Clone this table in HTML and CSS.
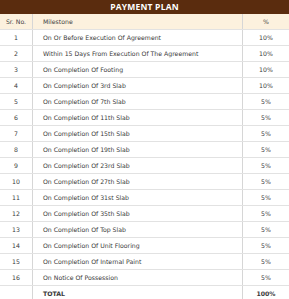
FILE: index.html
```html
<!DOCTYPE html>
<html>
<head>
<meta charset="utf-8">
<link rel="stylesheet" href="styles.css">
</head>
<body>
<div class="plan">
  <div class="title">PAYMENT PLAN</div>
  <table class="grid">
    <thead>
      <tr><th class="sr">Sr. No.</th><th class="ms">Milestone</th><th class="pc">%</th></tr>
    </thead>
    <tbody>
      <tr><td class="sr">1</td><td class="ms">On Or Before Execution Of Agreement</td><td class="pc">10%</td></tr>
      <tr><td class="sr">2</td><td class="ms">Within 15 Days From Execution Of The Agreement</td><td class="pc">10%</td></tr>
      <tr><td class="sr">3</td><td class="ms">On Completion Of Footing</td><td class="pc">10%</td></tr>
      <tr><td class="sr">4</td><td class="ms">On Completion Of 3rd Slab</td><td class="pc">10%</td></tr>
      <tr><td class="sr">5</td><td class="ms">On Completion Of 7th Slab</td><td class="pc">5%</td></tr>
      <tr><td class="sr">6</td><td class="ms">On Completion Of 11th Slab</td><td class="pc">5%</td></tr>
      <tr><td class="sr">7</td><td class="ms">On Completion Of 15th Slab</td><td class="pc">5%</td></tr>
      <tr><td class="sr">8</td><td class="ms">On Completion Of 19th Slab</td><td class="pc">5%</td></tr>
      <tr><td class="sr">9</td><td class="ms">On Completion Of 23rd Slab</td><td class="pc">5%</td></tr>
      <tr><td class="sr">10</td><td class="ms">On Completion Of 27th Slab</td><td class="pc">5%</td></tr>
      <tr><td class="sr">11</td><td class="ms">On Completion Of 31st Slab</td><td class="pc">5%</td></tr>
      <tr><td class="sr">12</td><td class="ms">On Completion Of 35th Slab</td><td class="pc">5%</td></tr>
      <tr><td class="sr">13</td><td class="ms">On Completion Of Top Slab</td><td class="pc">5%</td></tr>
      <tr><td class="sr">14</td><td class="ms">On Completion Of Unit Flooring</td><td class="pc">5%</td></tr>
      <tr><td class="sr">15</td><td class="ms">On Completion Of Internal Paint</td><td class="pc">5%</td></tr>
      <tr><td class="sr">16</td><td class="ms">On Notice Of Possession</td><td class="pc">5%</td></tr>
      <tr class="total"><td class="sr"></td><td class="ms">TOTAL</td><td class="pc">100%</td></tr>
    </tbody>
  </table>
</div>
</body>
</html>
```
FILE: styles.css
```css
html, body {
  margin: 0;
  padding: 0;
  background: #ffffff;
}
.plan {
  width: 289px;
  font-family: "DejaVu Sans", "Open Sans", sans-serif;
  color: #3a3a3a;
}
.title {
  height: 14px;
  background: #5a2c0e;
  color: #ffffff;
  font-family: "Open Sans", sans-serif;
  font-weight: 700;
  font-size: 8.5px;
  line-height: 14px;
  text-align: center;
  letter-spacing: 0.2px;
}
.grid {
  width: 289px;
  border-collapse: collapse;
  table-layout: fixed;
  font-size: 6.2px;
}
.grid th, .grid td {
  height: 15px;
  padding: 0;
  border-bottom: 1px solid #e2e2e2;
  vertical-align: middle;
  white-space: nowrap;
}
.grid thead th {
  background: #fcf1de;
  font-weight: 400;
  color: #444444;
  height: 15px;
}
.sr {
  width: 32px;
  text-align: center;
  border-right: 1px solid #d6d6d6;
}
.ms {
  text-align: left;
  padding-left: 10px !important;
}
.pc {
  width: 46px;
  text-align: center;
  border-left: 1px solid #d6d6d6;
}
.total td {
  font-weight: 700;
  border-bottom: none;
}
```
